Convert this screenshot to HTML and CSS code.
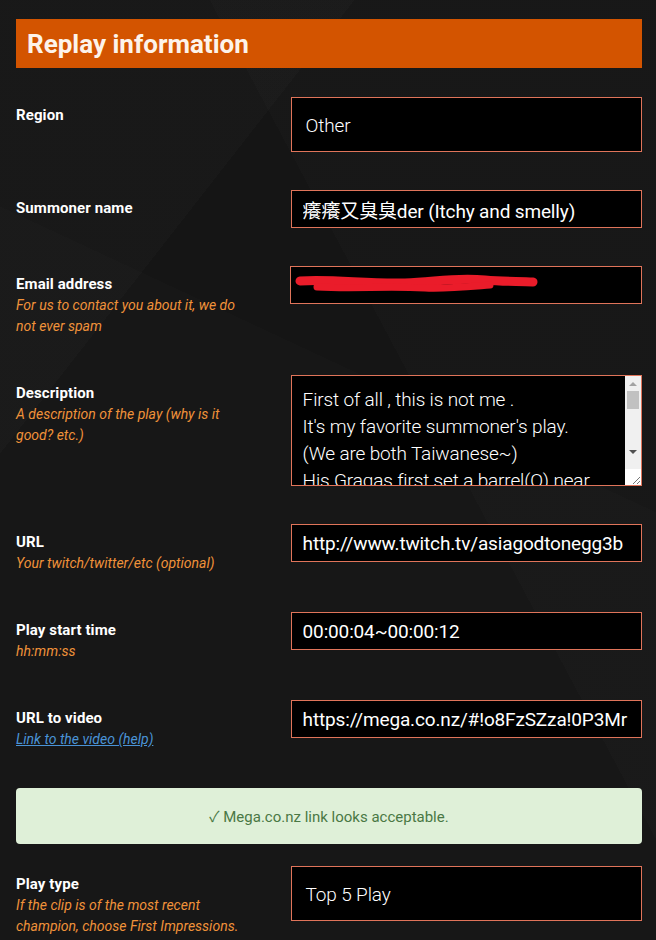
FILE: index.html
```html
<!DOCTYPE html>
<html lang="en">

<head>
  <meta charset="UTF-8">
  <meta name="viewport" content="width=device-width, initial-scale=1.0">
  <title>Replay information</title>
  <link rel="stylesheet" href="styles.css">
</head>

<body>
  <div class="page">
    <h1 class="section-title">Replay information</h1>

    <form class="replay-form">
      <div class="form-row">
        <div class="label-col">
          <label class="field-label">Region</label>
        </div>
        <div class="field-select">Other</div>
      </div>

      <div class="form-row">
        <div class="label-col">
          <label class="field-label">Summoner name</label>
        </div>
        <input type="text" class="field-input" value="癢癢又臭臭der (Itchy and smelly)">
      </div>

      <div class="form-row">
        <div class="label-col">
          <label class="field-label">Email address</label>
          <span class="field-hint">For us to contact you about it, we do not ever spam</span>
        </div>
        <div class="input-wrap">
          <input type="text" class="field-input" value="">
          <!-- redacted address -->
          <svg class="scribble" width="245" height="26" viewBox="0 0 245 26">
            <path d="M5 9 C40 7 70 12 110 11 C140 10 160 5 190 8 C210 10 225 9 238 10" stroke="#ea1c2a" stroke-width="9" fill="none" stroke-linecap="round"/>
            <path d="M22 15 C60 17 90 14 130 16 C150 17 170 15 195 13" stroke="#ea1c2a" stroke-width="7" fill="none" stroke-linecap="round"/>
          </svg>
        </div>
      </div>

      <div class="form-row">
        <div class="label-col">
          <label class="field-label">Description</label>
          <span class="field-hint">A description of the play (why is it good? etc.)</span>
        </div>
        <div class="textarea-box">
          <textarea class="field-textarea">First of all , this is not me .
It's my favorite summoner's play.
(We are both Taiwanese~)
His Gragas first set a barrel(Q) near the wall and then flashed over it to knock them back.</textarea>
          <div class="scrollbar">
            <span class="arrow-up"></span>
            <span class="scroll-thumb"></span>
            <span class="arrow-down"></span>
            <span class="resize-corner">
              <svg width="10" height="10" viewBox="0 0 10 10">
                <path d="M9 2 L2 9 M9 6 L6 9" stroke="#777" stroke-width="1"/>
              </svg>
            </span>
          </div>
        </div>
      </div>

      <div class="form-row">
        <div class="label-col">
          <label class="field-label">URL</label>
          <span class="field-hint">Your twitch/twitter/etc (optional)</span>
        </div>
        <input type="text" class="field-input" value="http://www.twitch.tv/asiagodtonegg3b">
      </div>

      <div class="form-row">
        <div class="label-col">
          <label class="field-label">Play start time</label>
          <span class="field-hint">hh:mm:ss</span>
        </div>
        <input type="text" class="field-input" value="00:00:04~00:00:12">
      </div>

      <div class="form-row">
        <div class="label-col">
          <label class="field-label">URL to video</label>
          <a class="field-link" href="#">Link to the video (help)</a>
        </div>
        <input type="text" class="field-input" value="https://mega.co.nz/#!o8FzSZza!0P3Mr">
      </div>

      <div class="alert-success">✓ Mega.co.nz link looks acceptable.</div>

      <div class="form-row">
        <div class="label-col">
          <label class="field-label">Play type</label>
          <span class="field-hint">If the clip is of the most recent champion, choose First Impressions.</span>
        </div>
        <div class="field-select">Top 5 Play</div>
      </div>
    </form>
  </div>
</body>

</html>
```

FILE: styles.css
```css
body {
  margin: 0;
  font-family: 'Roboto', 'Noto Sans CJK TC', sans-serif;
  color: #fff;
  background-color: #171717;
  background-image:
    linear-gradient(128deg, rgba(255, 255, 255, 0.015) 25%, transparent 25%),
    linear-gradient(62deg, transparent 62%, rgba(255, 255, 255, 0.01) 62%),
    linear-gradient(205deg, rgba(0, 0, 0, 0.1) 40%, transparent 40%);
  min-height: 940px;
}

.page {
  width: 626px;
  margin-left: 16px;
  padding-top: 19px;
}

.section-title {
  margin: 0 0 29px;
  height: 49px;
  line-height: 50px;
  padding-left: 11px;
  background-color: #d35400;
  color: #fdf3ea;
  font-size: 26px;
  font-weight: 700;
  letter-spacing: 0;
}

.form-row {
  display: flex;
  align-items: flex-start;
  margin-bottom: 38px;
}

.label-col {
  width: 235px;
  margin-right: 40px;
  padding-top: 8px;
  line-height: 21px;
}

.field-label {
  display: block;
  font-size: 15px;
  font-weight: 700;
  letter-spacing: 0.1px;
}

.field-hint {
  display: block;
  font-size: 14px;
  font-style: italic;
  color: #f0923a;
}

.field-link {
  display: block;
  font-size: 14px;
  font-style: italic;
  color: #4a93d6;
}

.field-input,
.field-select,
.field-textarea {
  box-sizing: border-box;
  width: 352px;
  margin: 0;
  background-color: #000;
  border: 1px solid #e0745a;
  border-radius: 0;
  color: #fff;
  font-family: 'Roboto', 'Noto Sans CJK TC', sans-serif;
  font-size: 19px;
  letter-spacing: -0.15px;
  outline: none;
}

.field-input {
  height: 38px;
  padding: 0 11px;
}

.field-select {
  display: flex;
  align-items: center;
  height: 55px;
  padding: 1px 14px 0;
  font-weight: 300;
}

.textarea-box {
  display: flex;
  box-sizing: border-box;
  width: 352px;
  height: 111px;
  border: 1px solid #e0745a;
  background-color: #000;
}

.field-textarea {
  flex: 1;
  width: auto;
  height: 100%;
  border: none;
  padding: 10px 11px;
  line-height: 27px;
  overflow: hidden;
  resize: none;
  font-weight: 300;
}

.scrollbar {
  display: flex;
  flex-direction: column;
  align-items: center;
  width: 16px;
  background-color: #f0f0f0;
}

.arrow-up,
.arrow-down {
  width: 0;
  height: 0;
  border-left: 4px solid transparent;
  border-right: 4px solid transparent;
}

.arrow-up {
  margin-top: 6px;
  border-bottom: 4px solid #a3a3a3;
}

.arrow-down {
  margin-top: 41px;
  border-top: 4px solid #505050;
}

.scroll-thumb {
  width: 12px;
  height: 18px;
  margin-top: 5px;
  background-color: #c1c1c1;
}

.resize-corner {
  display: flex;
  align-items: flex-end;
  justify-content: flex-end;
  box-sizing: border-box;
  width: 16px;
  height: 16px;
  margin-top: auto;
  background-color: #fff;
}

.input-wrap {
  position: relative;
}

.scribble {
  position: absolute;
  left: 5px;
  top: 6px;
}

.alert-success {
  height: 56px;
  line-height: 58px;
  margin-bottom: 22px;
  background-color: #dff0d8;
  border-radius: 4px;
  color: #4a7845;
  font-size: 15px;
  text-align: center;
}
```
